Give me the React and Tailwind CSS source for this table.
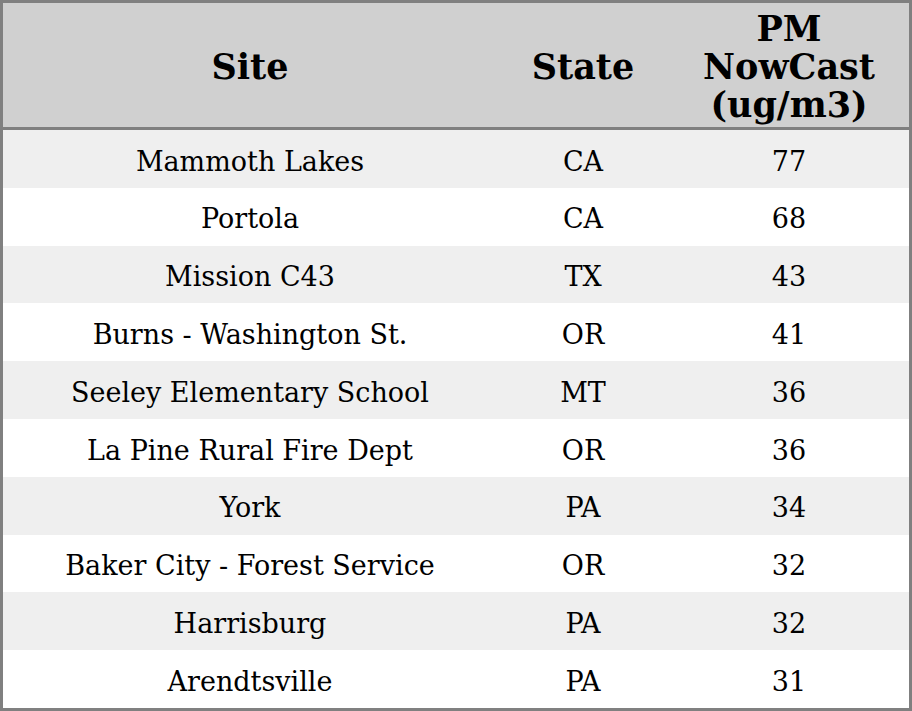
// App.jsx
const rows = [
  { site: "Mammoth Lakes", state: "CA", pm: 77 },
  { site: "Portola", state: "CA", pm: 68 },
  { site: "Mission C43", state: "TX", pm: 43 },
  { site: "Burns - Washington St.", state: "OR", pm: 41 },
  { site: "Seeley Elementary School", state: "MT", pm: 36 },
  { site: "La Pine Rural Fire Dept", state: "OR", pm: 36 },
  { site: "York", state: "PA", pm: 34 },
  { site: "Baker City - Forest Service", state: "OR", pm: 32 },
  { site: "Harrisburg", state: "PA", pm: 32 },
  { site: "Arendtsville", state: "PA", pm: 31 },
];

const cols = "grid grid-cols-[494px_172px_1fr] items-center text-center";

function App() {
  return (
    <div
      className="w-[912px] h-[711px] flex flex-col border-[3px] border-[#808080] bg-white text-black"
      style={{ fontFamily: '"DejaVu Serif", serif' }}
    >
      {/* Header */}
      <div className={`${cols} h-[127px] shrink-0 pt-[4px] bg-[#d0d0d0] border-b-[3px] border-[#808080] text-[35px] font-bold leading-[38px]`}>
        <div>Site</div>
        <div>State</div>
        <div>
          PM
          <br />
          NowCast
          <br />
          (ug/m3)
        </div>
      </div>

      {/* Body */}
      <div className="flex-1 flex flex-col">
        {rows.map((row, i) => (
          <div
            key={i}
            className={`${cols} flex-1 pt-[6px] text-[27px] ${i % 2 === 0 ? "bg-[#efefef]" : "bg-white"}`}
          >
            <div>{row.site}</div>
            <div>{row.state}</div>
            <div>{row.pm}</div>
          </div>
        ))}
      </div>
    </div>
  );
}

export default App;
